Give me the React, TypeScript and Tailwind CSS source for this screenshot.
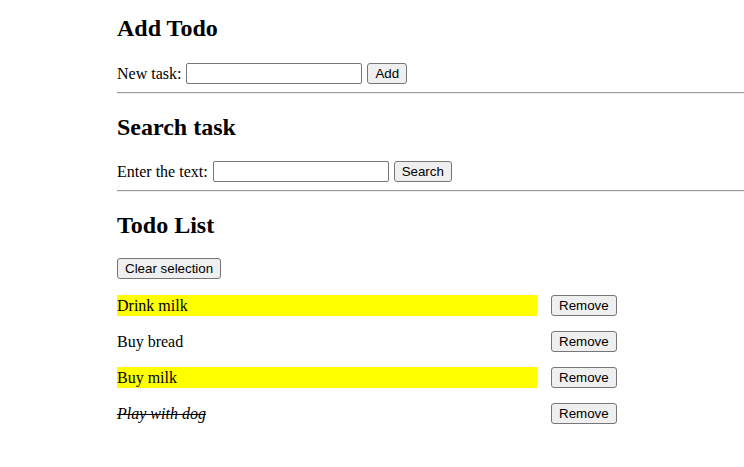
import React from "react";

const btn =
  "h-[21px] px-[7px] bg-[#efefef] border border-[#767676] rounded-[3px] font-['Liberation_Sans',Arial,sans-serif] text-[13.33px] leading-none text-black";

const todos = [
  { text: "Drink milk", selected: true, done: false },
  { text: "Buy bread", selected: false, done: false },
  { text: "Buy milk", selected: true, done: false },
  { text: "Play with dog", selected: false, done: true },
];

const Rule = () => (
  <hr className="mt-[8px] border-0 border-t border-b border-t-[#9a9a9a] border-b-[#eeeeee]" />
);

const App = () => {
  return (
    <div className="min-h-[467px] bg-white pl-[117px] pt-[15px] font-['Liberation_Serif','Times_New_Roman',serif] text-[16px] text-black">
      <h2 className="text-[24px] leading-[27px] font-bold">Add Todo</h2>
      <div className="mt-[21px] flex items-center gap-[5px] h-[21px]">
        <span>New task:</span>
        <input className="w-[176px] h-[21px] bg-white border border-[#767676] rounded-[2px] px-[2px] text-[13.33px]" />
        <button className={btn}>Add</button>
      </div>
      <Rule />

      <h2 className="mt-[20px] text-[24px] leading-[27px] font-bold">Search task</h2>
      <div className="mt-[20px] flex items-center gap-[5px] h-[21px]">
        <span>Enter the text:</span>
        <input className="w-[176px] h-[21px] bg-white border border-[#767676] rounded-[2px] px-[2px] text-[13.33px]" />
        <button className={btn}>Search</button>
      </div>
      <Rule />

      <h2 className="mt-[20px] text-[24px] leading-[27px] font-bold">Todo List</h2>
      <div className="mt-[19px] flex">
        <button className={btn}>Clear selection</button>
      </div>

      <div className="mt-[16px] flex flex-col gap-[15px]">
        {todos.map((todo, i) => (
          <div key={i} className="flex items-center h-[21px]">
            <span
              className={
                "flex items-center h-[21px] w-[420px] " +
                (todo.selected ? "bg-[#ffff00] " : "") +
                (todo.done ? "italic line-through" : "")
              }
            >
              {todo.text}
            </span>
            <button className={btn + " ml-[14px]"}>Remove</button>
          </div>
        ))}
      </div>
    </div>
  );
};

export default App;
